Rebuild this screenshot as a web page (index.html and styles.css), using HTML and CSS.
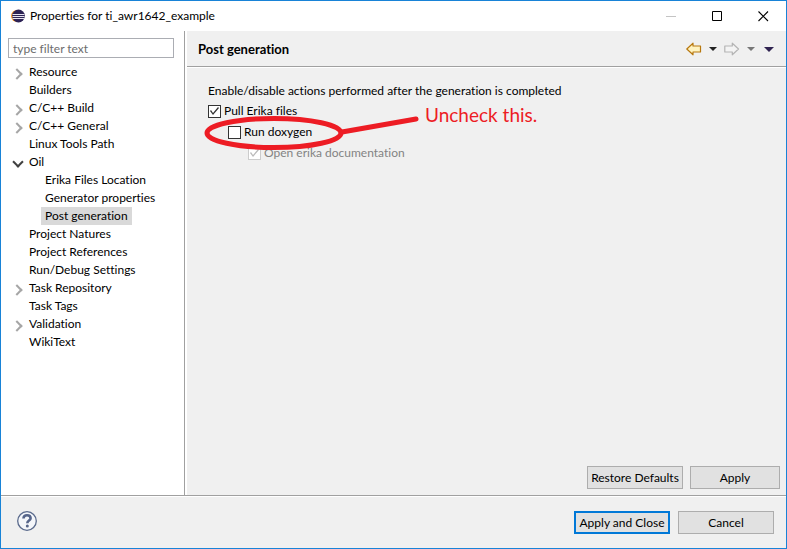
FILE: index.html
```html
<!DOCTYPE html>
<html lang="en">
<head>
    <meta charset="UTF-8">
    <meta name="viewport" content="width=device-width, initial-scale=1.0">
    <title>Properties for ti_awr1642_example</title>
    <link rel="stylesheet" href="styles.css">
</head>
<body>

    <div class="window">
        <header class="titlebar">
            <svg class="app-icon" width="14" height="14" viewBox="0 0 14 14">
                <circle cx="6" cy="7" r="6" fill="#f7941e"/>
                <circle cx="7.5" cy="7" r="6.4" fill="#2c2255"/>
                <path d="M1.5 5.5h12M1.5 7.5h12M1.5 9.5h12" stroke="#e6e4f0"/>
            </svg>
            <h1>Properties for ti_awr1642_example</h1>
            <div class="window-buttons">
                <button aria-label="Minimize" disabled>
                    <svg width="11" height="11" viewBox="0 0 11 11"><path d="M0 5.5h10" stroke="#c4c4c4"/></svg>
                </button>
                <button aria-label="Maximize">
                    <svg width="11" height="11" viewBox="0 0 11 11"><path d="M.5 .5h9v9h-9z" fill="none" stroke="#000"/></svg>
                </button>
                <button aria-label="Close">
                    <svg width="11" height="11" viewBox="0 0 11 11"><path d="M.5 .5l9.5 9.5M10 .5L.5 10" stroke="#000" stroke-width="1.1"/></svg>
                </button>
            </div>
        </header>

        <main class="main">
            <nav class="sidebar">
                <input class="filter" type="text" placeholder="type filter text" aria-label="Filter">
                <ul class="tree">
                    <li class="closed"><a href="#">Resource</a></li>
                    <li><a href="#">Builders</a></li>
                    <li class="closed"><a href="#">C/C++ Build</a></li>
                    <li class="closed"><a href="#">C/C++ General</a></li>
                    <li><a href="#">Linux Tools Path</a></li>
                    <li class="open">
                        <a href="#">Oil</a>
                        <ul>
                            <li><a href="#">Erika Files Location</a></li>
                            <li><a href="#">Generator properties</a></li>
                            <li><a href="#" class="selected">Post generation</a></li>
                        </ul>
                    </li>
                    <li><a href="#">Project Natures</a></li>
                    <li><a href="#">Project References</a></li>
                    <li><a href="#">Run/Debug Settings</a></li>
                    <li class="closed"><a href="#">Task Repository</a></li>
                    <li><a href="#">Task Tags</a></li>
                    <li class="closed"><a href="#">Validation</a></li>
                    <li><a href="#">WikiText</a></li>
                </ul>
            </nav>

            <section class="page">
                <div class="page-header">
                    <h2>Post generation</h2>
                    <div class="history">
                        <button aria-label="Back">
                            <svg width="16" height="14" viewBox="0 0 16 14">
                                <path d="M.8 7L7 1.200V4h7.500v6H7v2.800z" fill="#fff3c0" stroke="#b8780e" stroke-width="1.200" stroke-linejoin="round"/>
                            </svg>
                        </button>
                        <button aria-label="Back history">
                            <svg width="8" height="4" viewBox="0 0 8 4"><path d="M0 0h8L4 4z" fill="#222"/></svg>
                        </button>
                        <button aria-label="Forward" disabled>
                            <svg width="16" height="14" viewBox="0 0 16 14">
                                <path d="M14.500 7L8.300 1.200V4H.8v6h7.500v2.800z" fill="#f4f4f4" stroke="#b4b4b4" stroke-width="1.200" stroke-linejoin="round"/>
                            </svg>
                        </button>
                        <button aria-label="Forward history" disabled>
                            <svg width="8" height="4" viewBox="0 0 8 4"><path d="M0 0h8L4 4z" fill="#777"/></svg>
                        </button>
                        <button aria-label="View menu">
                            <svg width="10" height="5" viewBox="0 0 10 5"><path d="M0 0h10L5 5z" fill="#2f2350"/></svg>
                        </button>
                    </div>
                </div>

                <div class="options">
                    <p>Enable/disable actions performed after the generation is completed</p>
                    <label class="option"><input type="checkbox" checked>Pull Erika files</label>
                    <label class="option level-1"><input type="checkbox">Run doxygen</label>
                    <label class="option level-2"><input type="checkbox" checked disabled>Open erika documentation</label>

                    <!-- hand-drawn hint on top of the options -->
                    <div class="hint">
                        <svg width="216" height="38" viewBox="0 0 216 38" fill="none" stroke="#ed1c24" stroke-width="5" stroke-linecap="round">
                            <ellipse cx="70" cy="18" rx="67" ry="14.500"/>
                            <path d="M138 17L212 4"/>
                        </svg>
                        <span>Uncheck this.</span>
                    </div>
                </div>

                <div class="page-buttons">
                    <button class="btn">Restore Defaults</button>
                    <button class="btn small">Apply</button>
                </div>
            </section>
        </main>

        <footer class="footer">
            <button class="help" aria-label="Help">
                <svg width="20" height="20" viewBox="0 0 20 20">
                    <circle cx="10" cy="10" r="9.300" fill="#f4f6fa" stroke="#5a6a8c" stroke-width="1.300"/>
                    <path d="M6.500 7.600C6.500 5.200 8 4.200 10 4.200s3.600 1.100 3.600 3c0 2.400-3.300 2.300-3.300 5" fill="none" stroke="#56658a" stroke-width="2.600"/>
                    <circle cx="10.300" cy="15" r="1.500" fill="#56658a"/>
                </svg>
            </button>
            <button class="btn primary">Apply and Close</button>
            <button class="btn">Cancel</button>
        </footer>
    </div>

</body>
</html>
```
FILE: styles.css
```css
* {
    margin: 0;
    padding: 0;
    box-sizing: border-box;
}

body, button, input {
    font-family: Lato, "Open Sans", sans-serif;
    font-size: 12px;
    font-variant-ligatures: none;
    line-height: 18px;
    color: #000;
}

button {
    border: none;
    background: none;
}

ul {
    list-style: none;
}

a {
    color: inherit;
    text-decoration: none;
}

svg {
    display: block;
}

.window {
    display: flex;
    flex-direction: column;
    min-height: 100vh;
    border: 1px solid #1883d7;
    background: #f0f0f0;
}

/* title bar */
.titlebar {
    display: flex;
    align-items: center;
    height: 30px;
    padding-left: 10px;
    background: #fff;
}

.titlebar h1 {
    flex: 1;
    margin-left: 5px;
    font-size: 12px;
    font-weight: 400;
}

.window-buttons {
    display: flex;
}

.window-buttons button {
    display: flex;
    justify-content: center;
    width: 46px;
}

/* category tree */
.main {
    display: flex;
    flex: 1;
    border-bottom: 1px solid #a0a0a0;
}

.sidebar {
    width: 184px;
    padding: 7px 10px 7px 7px;
    border-right: 1px solid #a0a0a0;
    background: #fff;
}

.filter {
    display: block;
    width: 100%;
    height: 20px;
    padding: 0 4px;
    border: 1px solid #abadb3;
}

.filter::placeholder {
    color: #6d6d6d;
}

.tree {
    margin-top: 5px;
}

.tree li {
    padding-left: 17px;
}

.tree ul li {
    padding-left: 16px;
}

.tree a {
    display: inline-block;
    height: 18px;
    padding: 0 4px;
    vertical-align: top;
}

.tree a.selected {
    background: #d9d9d9;
}

.closed::before,
.open::before {
    content: "";
    float: left;
    width: 6px;
    height: 6px;
    margin: 7px 0 0 -12px;
    border: solid #a6a6a6;
    border-width: 2px 2px 0 0;
    transform: rotate(45deg);
}

.open::before {
    margin: 5px 0 0 -11px;
    border-color: #404040;
    transform: rotate(135deg);
}

/* settings page */
.page {
    display: flex;
    flex: 1;
    flex-direction: column;
    border-left: 2px solid #fff;
}

.page-header {
    display: flex;
    align-items: center;
    justify-content: space-between;
    height: 36px;
    padding: 1px 12px 0 11px;
    border-bottom: 1px solid #a0a0a0;
    box-shadow: 0 1px #fff;
}

.page-header h2 {
    font-size: 13px;
    font-weight: 700;
}

.history {
    display: flex;
    align-items: center;
    gap: 7px;
}

.history button:last-child {
    margin-left: 2px;
}

.options {
    position: relative;
    flex: 1;
    padding: 16px 21px;
}

.options p {
    line-height: 16px;
}

.option {
    display: flex;
    align-items: center;
    gap: 3px;
    width: fit-content;
    margin-top: 3px;
}

.level-1 {
    margin-left: 20px;
}

.level-2 {
    margin-left: 40px;
    color: #838383;
}

.option input {
    display: grid;
    place-content: center;
    width: 13px;
    height: 13px;
    border: 1px solid #333;
    background: #fff;
    appearance: none;
}

.option input:checked::before {
    content: "";
    width: 9px;
    height: 8px;
    background: #333;
    clip-path: polygon(0 4px, 1px 3px, 3px 6px, 8px 0, 9px 1px, 3px 8px);
}

.option input:disabled {
    border-color: #ccc;
}

.option input:disabled::before {
    background: #bbb;
}

.hint {
    position: absolute;
    top: 48px;
    left: 17px;
    display: flex;
    align-items: flex-start;
    gap: 5px;
    pointer-events: none;
}

.hint span {
    margin-top: -12px;
    font-size: 19px;
    line-height: 24px;
    color: #ed1c24;
}

/* buttons */
.btn {
    min-width: 96px;
    height: 23px;
    border: 1px solid #adadad;
    background: #e1e1e1;
}

.btn.small {
    min-width: 90px;
}

.btn.primary {
    border: 2px solid #0078d7;
}

.page-buttons {
    display: flex;
    justify-content: flex-end;
    gap: 7px;
    padding: 0 6px 6px;
}

.footer {
    display: flex;
    align-items: center;
    gap: 8px;
    height: 52px;
    padding: 0 12px 0 16px;
    border-top: 1px solid #fff;
}

.help {
    margin: 0 auto 4px 0;
}
```
